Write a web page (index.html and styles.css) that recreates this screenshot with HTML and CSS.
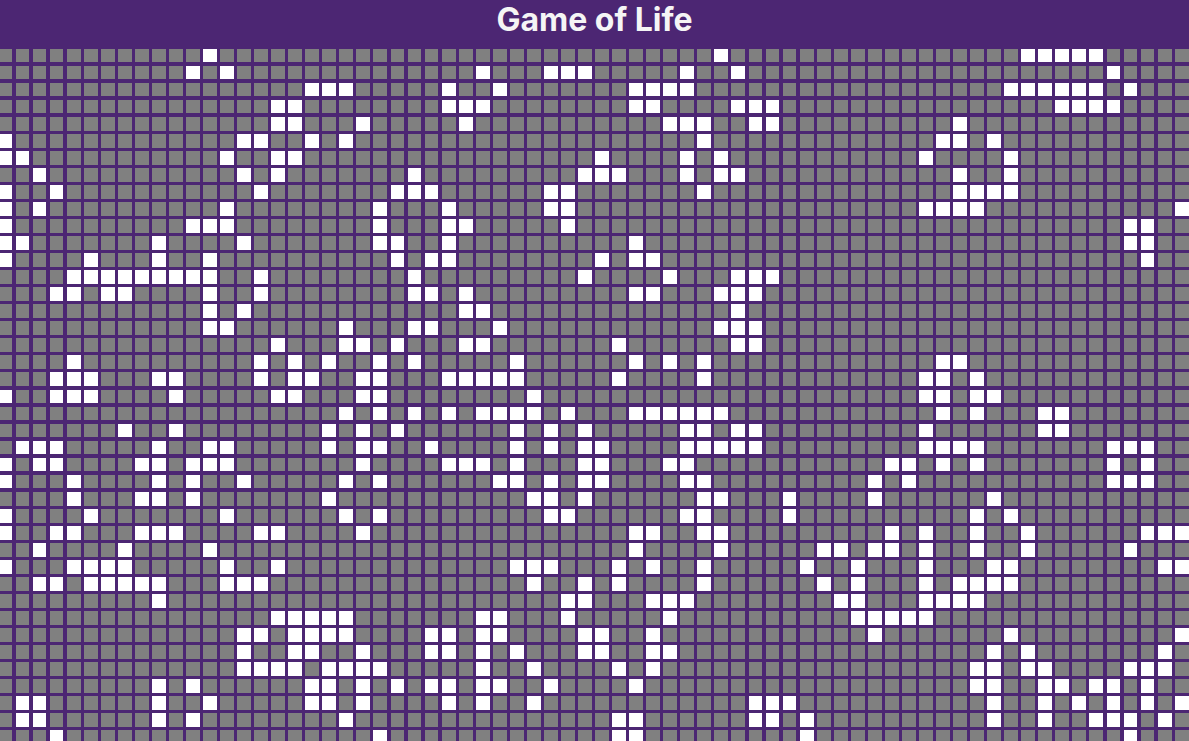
FILE: index.html
```html
<!DOCTYPE html>
<html lang="en">
<head>
    <meta charset="UTF-8">
    <meta name="viewport" content="width=device-width, initial-scale=1.0">
    <title>Game of Life</title>
    <link rel="stylesheet" href="styles.css">
</head>
<body>

    <header class="header">
        <h1>Game of Life</h1>
    </header>

    <!-- Cells are filled in by game.js -->
    <div class="board" id="board"></div>

    <script src="game.js"></script>
</body>
</html>
```

FILE: styles.css
```css
/* General reset */
* {
    margin: 0;
    padding: 0;
    box-sizing: border-box;
}

body {
    font-family: 'Inter', sans-serif;
    background-color: #4c2673;
    height: 100vh;
    overflow: hidden;
}

/* Title bar */
.header {
    height: 48.578125px;
    text-align: center;
}

.header h1 {
    font-size: 32px;
    font-weight: 700;
    color: #f5f5f5;
}

/* Board */
.board {
    display: grid;
    grid-template-columns: repeat(70, 13.859375px);
    grid-auto-rows: 13.734375px;
    column-gap: 3.1875px;
    row-gap: 3.3125px;
    margin-left: -1.546875px;
}

.cell {
    background-color: #808080;
}

.cell.alive {
    background-color: #ffffff;
}
```

FILE: game.js
```js
// Live columns for each row of the board
const COLUMNS = 70;
const liveCells = [
    [12],
    [11, 13],
    [18, 19, 20],
    [16, 17],
    [16, 17, 21],
    [0, 14, 15, 18, 20],
    [0, 1, 13, 16, 17],
    [2, 14, 16],
    [0, 3, 15, 23],
    [0, 2, 13, 22],
    [0, 11, 12, 13, 22],
    [0, 1, 9, 14, 22, 23],
    [0, 5, 9, 12, 23],
    [4, 5, 6, 7, 8, 9, 10, 11, 12, 15],
    [3, 4, 6, 7, 12, 15],
    [12, 14],
    [12, 13, 20],
    [16, 20, 21, 23],
    [4, 15, 17, 19, 22],
    [3, 4, 5, 9, 10, 15, 17, 18, 21, 22],
    [0, 3, 4, 5, 10, 16, 17, 21, 22],
    [20, 22],
    [7, 10, 19, 21, 23],
    [1, 2, 3, 9, 12, 13, 19, 21, 22],
    [0, 2, 3, 8, 9, 11, 12, 13, 21],
    [0, 4, 9, 11, 14, 20, 22],
    [4, 8, 9, 11, 19],
    [0, 5, 13, 20, 22],
    [0, 3, 4, 8, 9, 10, 15, 16, 21],
    [2, 7, 12],
    [0, 4, 5, 6, 7, 13, 16],
    [2, 3, 5, 6, 7, 8, 9, 13, 14, 15],
    [9],
    [16, 17, 18, 19, 20],
    [14, 15, 17, 18, 19, 20],
    [14, 17, 18, 21],
    [14, 15, 16, 17, 19, 20, 21, 22],
    [9, 11, 18, 19, 21, 23],
    [1, 2, 9, 12, 18, 19, 21],
    [1, 2, 9, 11, 20],
    [3, 22]
];

// Second third of the board, added to the rows above
const middleCells = [
    [42],
    [28, 32, 33, 34, 40, 43],
    [26, 29, 37, 38, 39, 40],
    [26, 27, 28, 37, 38, 43, 44, 45],
    [27, 39, 40, 41, 44, 45],
    [41],
    [35, 40, 42],
    [24, 34, 35, 36, 40, 42, 43],
    [24, 25, 32, 33, 41],
    [26, 32, 33],
    [26, 27, 33],
    [26, 37],
    [25, 26, 35, 37, 38],
    [24, 34, 39, 43, 44, 45],
    [24, 25, 27, 37, 38, 42, 43, 44],
    [27, 28, 43],
    [24, 25, 29, 42, 43, 44],
    [27, 28, 36, 43, 44],
    [24, 30, 37, 39, 41],
    [26, 27, 28, 29, 30, 36, 41],
    [31],
    [24, 26, 28, 29, 30, 31, 33, 37, 38, 39, 40, 41, 42],
    [30, 32, 34, 40, 41, 43, 44],
    [25, 30, 32, 34, 35, 40, 41, 42, 43, 44],
    [26, 27, 28, 30, 34, 35, 39, 40],
    [29, 30, 32, 34, 35, 40, 41],
    [31, 32, 34, 41, 42, 46],
    [32, 33, 40, 41, 46],
    [37, 38, 41, 42],
    [37, 42],
    [30, 31, 32, 36, 38, 41],
    [31, 34, 36, 41],
    [33, 34, 38, 39, 40],
    [28, 29, 33, 39],
    [25, 26, 28, 29, 34, 35, 38],
    [25, 26, 28, 30, 34, 35, 38, 39],
    [28, 31, 36, 38],
    [25, 26, 28, 29, 32, 37],
    [26, 28, 31, 44, 45, 46],
    [36, 37, 44, 45],
    [36, 37]
];

// Last third of the board
const rightCells = [
    [60, 61, 62, 63, 64],
    [65],
    [59, 60, 61, 62, 63, 64, 66],
    [62, 63, 64, 65],
    [56],
    [55, 56, 58],
    [54, 59],
    [56, 59],
    [56, 57, 58, 59],
    [54, 55, 56, 57, 69],
    [66, 67],
    [66, 67],
    [67],
    [],
    [],
    [],
    [],
    [],
    [55, 56],
    [54, 55, 57],
    [54, 55, 57, 58],
    [55, 57, 61, 62],
    [54, 61, 62],
    [54, 55, 56, 57, 65, 66, 67],
    [52, 53, 55, 57, 65, 67],
    [51, 53, 65, 66, 67],
    [51, 58],
    [57, 59],
    [52, 54, 57, 60, 67, 68, 69],
    [48, 49, 51, 52, 54, 57, 60, 66],
    [47, 50, 54, 58, 59, 68, 69],
    [48, 50, 54, 56, 57, 58, 59],
    [49, 50, 54, 55, 56, 57],
    [50, 51, 52, 53, 54],
    [51, 59, 69],
    [58, 60, 68],
    [57, 58, 60, 61, 66, 67, 68],
    [57, 58, 61, 62, 64, 65, 67],
    [58, 61, 63, 65, 67, 69],
    [47, 58, 61, 64, 65, 66, 68],
    [47, 66]
];

const board = document.getElementById('board');

liveCells.forEach(function(row, r) {
    const live = row.concat(middleCells[r], rightCells[r]);
    for (let c = 0; c < COLUMNS; c++) {
        const cell = document.createElement('div');
        cell.className = live.includes(c) ? 'cell alive' : 'cell';
        board.appendChild(cell);
    }
});
```
